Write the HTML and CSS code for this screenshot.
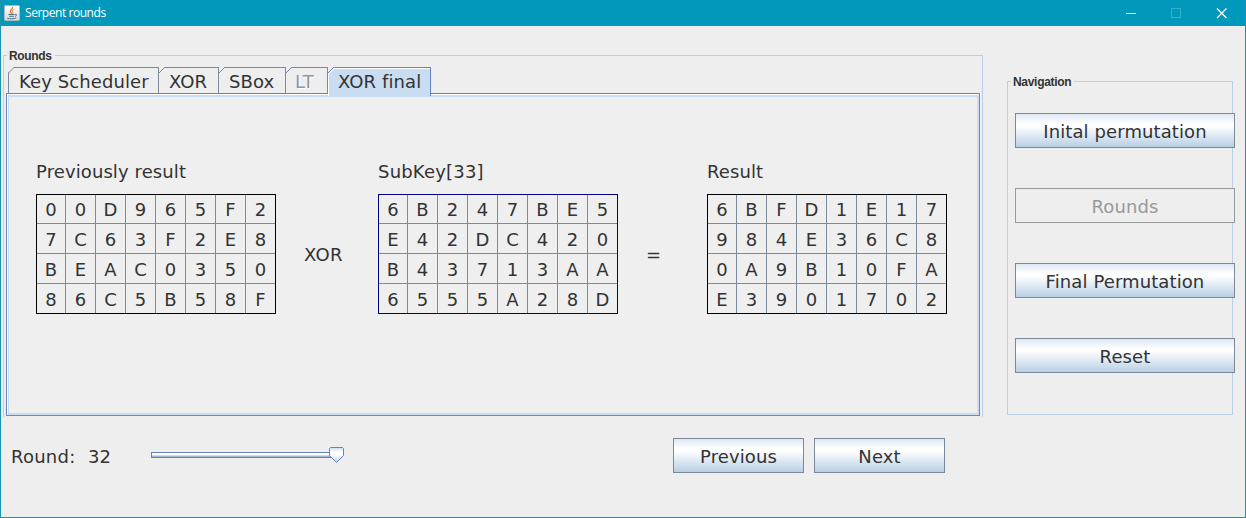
FILE: index.html
```html
<!DOCTYPE html>
<html lang="en">
<head>
<meta charset="utf-8">
<title>Serpent rounds</title>
<link rel="stylesheet" href="styles.css">
</head>
<body>
<div class="window">
  <header class="titlebar">
    <svg class="app-icon" width="16" height="16" viewBox="0 0 16 16">
      <defs><linearGradient id="tile" x1="0" y1="0" x2="0" y2="1"><stop offset="0" stop-color="#fff"/><stop offset="1" stop-color="#d5d9dc"/></linearGradient></defs>
      <rect x=".5" y=".5" width="15" height="15" rx="1" fill="url(#tile)" stroke="#a9b9bf"/>
      <path d="M8.600 2C9.400 4 5.600 5 6.400 6.900C6.700 7.700 7.500 8 7.600 9" fill="none" stroke="#e8762c" stroke-width="1.300"/>
      <path d="M10.300 4.400C8.300 5.200 8 6 8.900 7.200C9.200 7.800 8.700 8.300 8.300 8.700" fill="none" stroke="#ee8a3c" stroke-width="1"/>
      <path d="M4.300 9.500H10.600M5.200 11.300H10M11 9.300C13.300 8.700 13 11 11 11.300M3.200 13.200C5.500 14 10 14 12.300 13" fill="none" stroke="#4d7390" stroke-width="1"/>
    </svg>
    <span class="title">Serpent rounds</span>
    <svg class="controls" width="102" height="12" viewBox="0 0 102 12">
      <path d="M0 6.500H10" stroke="#fff"/>
      <rect x="45.500" y="1.500" width="9" height="9" fill="none" stroke="#35b0cc"/>
      <path d="M91 1.500L100.500 11M100.500 1.500L91 11" stroke="#fff" stroke-width="1.200"/>
    </svg>
  </header>
  <main class="content">
    <section class="main-column">
      <fieldset class="rounds">
        <legend>Rounds</legend>
        <nav class="tabs">
          <div class="tab tab-key"><svg class="notch" width="7" height="7"><path d="M0 0H6L0 6Z" fill="#eee"/><path d="M0 6.500L6.500 0" stroke="#7a8a99"/></svg><span>Key Scheduler</span></div>
          <div class="tab tab-xor"><svg class="notch" width="7" height="7"><path d="M0 0H6L0 6Z" fill="#eee"/><path d="M0 6L6 0" stroke="#7a8a99"/></svg><span>XOR</span></div>
          <div class="tab tab-sbox"><svg class="notch" width="7" height="7"><path d="M0 0H6L0 6Z" fill="#eee"/><path d="M0 6L6 0" stroke="#7a8a99"/></svg><span>SBox</span></div>
          <div class="tab tab-lt"><svg class="notch" width="7" height="7"><path d="M0 0H6L0 6Z" fill="#eee"/><path d="M0 6L6 0" stroke="#7a8a99"/></svg><span>LT</span></div>
          <div class="tab tab-final"><svg class="notch" width="7" height="7"><path d="M0 0H6L0 6Z" fill="#eee"/><path d="M0 6L6 0" stroke="#6382bf"/><path d="M.5 7L7 .5" stroke="#fff"/></svg><span>XOR final</span></div>
        </nav>
        <div class="panel">
          <div class="block">
            <h2 class="t-prev">Previously result</h2>
            <div class="matrix">
              <b>0</b><b>0</b><b>D</b><b>9</b><b>6</b><b>5</b><b>F</b><b>2</b>
              <b>7</b><b>C</b><b>6</b><b>3</b><b>F</b><b>2</b><b>E</b><b>8</b>
              <b>B</b><b>E</b><b>A</b><b>C</b><b>0</b><b>3</b><b>5</b><b>0</b>
              <b>8</b><b>6</b><b>C</b><b>5</b><b>B</b><b>5</b><b>8</b><b>F</b>
            </div>
          </div>
          <div class="operator op-xor">XOR</div>
          <div class="block">
            <h2 class="t-sub">SubKey[33]</h2>
            <div class="matrix key">
              <b>6</b><b>B</b><b>2</b><b>4</b><b>7</b><b>B</b><b>E</b><b>5</b>
              <b>E</b><b>4</b><b>2</b><b>D</b><b>C</b><b>4</b><b>2</b><b>0</b>
              <b>B</b><b>4</b><b>3</b><b>7</b><b>1</b><b>3</b><b>A</b><b>A</b>
              <b>6</b><b>5</b><b>5</b><b>5</b><b>A</b><b>2</b><b>8</b><b>D</b>
            </div>
          </div>
          <div class="operator op-eq">=</div>
          <div class="block">
            <h2 class="t-res">Result</h2>
            <div class="matrix">
              <b>6</b><b>B</b><b>F</b><b>D</b><b>1</b><b>E</b><b>1</b><b>7</b>
              <b>9</b><b>8</b><b>4</b><b>E</b><b>3</b><b>6</b><b>C</b><b>8</b>
              <b>0</b><b>A</b><b>9</b><b>B</b><b>1</b><b>0</b><b>F</b><b>A</b>
              <b>E</b><b>3</b><b>9</b><b>0</b><b>1</b><b>7</b><b>0</b><b>2</b>
            </div>
          </div>
        </div>
      </fieldset>
      <footer class="round-bar">
        <span class="round-label">Round:</span><span class="round-value">32</span>
        <svg class="slider" width="194" height="17" viewBox="0 0 194 17">
          <defs>
            <linearGradient id="thumb" x1="0" y1="0" x2="0" y2="1"><stop offset="0" stop-color="#c8ddf2"/><stop offset=".3" stop-color="#fff"/><stop offset=".5" stop-color="#fff"/><stop offset="1" stop-color="#b8cfe5"/></linearGradient>
          </defs>
          <rect x=".5" y="5.500" width="185" height="5" fill="#fff" stroke="#6382bf"/>
          <path d="M1 8.500H180" stroke="#c8ddf2"/><path d="M1 9.500H180" stroke="#a3b8cc"/>
          <path d="M179.500 .5H191.500L192.500 1.500V8.500L185.500 15.500L178.500 8.500V1.500Z" fill="url(#thumb)" stroke="#6382bf"/>
        </svg>
        <button class="btn step b-prev">Previous</button>
        <button class="btn step b-next">Next</button>
      </footer>
    </section>
    <fieldset class="navigation">
      <legend>Navigation</legend>
      <button class="btn b-init">Inital permutation</button>
      <button class="btn b-rounds" disabled>Rounds</button>
      <button class="btn b-final">Final Permutation</button>
      <button class="btn b-reset">Reset</button>
    </fieldset>
  </main>
</div>
</body>
</html>
```
FILE: styles.css
```css
* { box-sizing: border-box; }
body { margin: 0; font: 18px/22px "DejaVu Sans", Verdana, sans-serif; letter-spacing: 0.1px; font-variant-ligatures: none; color: #333; }
.window { width: 1246px; height: 518px; border: 1px solid #1c94ad; border-top: 0; background: #eee; overflow: hidden; }
.titlebar { height: 26px; display: flex; align-items: center; margin: 0 -1px; padding: 0 18px 0 4px; background: #0099bc; }
.title { margin-left: 5px; font: 12px/16px "Open Sans", "Noto Sans", sans-serif; letter-spacing: -0.45px; color: #fff; }
.controls { margin-left: auto; }
.content { display: flex; height: 491px; }
.main-column { width: 982px; padding: 23px 0 0 2px; }
fieldset { margin: 0; min-width: 0; border: 1px solid #b8cfe5; }
legend { margin: 0; padding: 1px 3px 0 2px; font: bold 12px/13px "Liberation Sans", Arial, sans-serif; letter-spacing: -0.35px; }
.rounds { width: 980px; height: 368px; padding: 5px 2px 0; border-bottom: 0; }
.rounds legend { height: 13px; margin-left: 1px; }
.tabs { display: flex; height: 26px; padding-left: 2px; }
.tab { position: relative; height: 26px; padding: 3px 0 0 10px; border: 1px solid #7a8a99; border-width: 1px 1px 0 0; white-space: nowrap; }
.tab:first-child { border-left-width: 1px; }
.notch { position: absolute; left: 0; top: -1px; }
.tab-key .notch { left: -1px; }
.tab-key { width: 151px; }
.tab-xor { width: 60px; }
.tab-sbox { width: 67px; }
.tab-lt { width: 42px; padding-left: 9px; color: #8b98a5; text-shadow: 1px 1px #fff; }
.tab-final { width: 103px; height: 29px; background: #c8ddf2; border-color: #6382bf; box-shadow: inset 1px 1px #fff; z-index: 1; }
.panel { display: flex; width: 974px; height: 323px; padding: 64px 0 0 27px; border: 1px solid #6382bf; border-color: #6382bf #7a8a99 #7a8a99 #6382bf; background: #efefef; box-shadow: inset 1px 1px #fff, inset 0 3px #c8ddf2, inset -2px -2px #c8ddf2, inset 2px 0 #c8ddf2; }
.block { width: 240px; padding-top: 3px; margin-left: 2px; }
h2 { margin: 0 0 11px; font: inherit; white-space: nowrap; }
.t-sub { letter-spacing: 0.2px; }
.matrix { display: grid; grid-template-columns: 29px repeat(6, 30px) 29px; grid-template-rows: 29px 30px 30px 29px; width: 240px; border: 1px solid #000; letter-spacing: 0; }
.matrix.key { border-color: #000080; }
.matrix b { font-weight: normal; line-height: 30px; text-align: center; border: solid #7a8a99; border-width: 0 1px 1px 0; }
.matrix b:nth-child(n+9) { line-height: 32px; }
.matrix b:nth-child(8n) { border-right: 0; }
.matrix b:nth-child(n+25) { border-bottom: 0; }
.operator { padding-top: 86px; }
.op-xor { width: 100px; padding-left: 28px; letter-spacing: 0.3px; }
.op-eq { width: 87px; padding-left: 28px; }
.round-bar { display: flex; height: 35px; margin-top: 21px; padding-left: 8px; }
.round-label { width: 77px; padding-top: 8px; letter-spacing: 0.25px; }
.round-value { width: 63px; padding-top: 8px; letter-spacing: 0; }
.slider { margin-top: 9px; }
.btn { display: block; height: 35px; margin: 0; padding: 2px 0 0; border: 1px solid #7a8a99; border-radius: 0; font: inherit; letter-spacing: 0.1px; color: #333; white-space: nowrap; background: linear-gradient(#dde8f3 0%, #fff 30%, #fff 36%, #b8cfe5 100%); }
.step { width: 131px; }
.b-prev { margin-left: 328px; }
.b-next { margin-left: 10px; }
.navigation { width: 226px; height: 340px; margin: 49px 0 0 24px; padding: 25px 0 0 7px; }
.navigation legend { height: 13px; margin-left: -4px; letter-spacing: -0.3px; }
.navigation .btn { width: 220px; margin-bottom: 40px; }
.btn:disabled { background: #eee; color: #999; border-color: #999; }
```
